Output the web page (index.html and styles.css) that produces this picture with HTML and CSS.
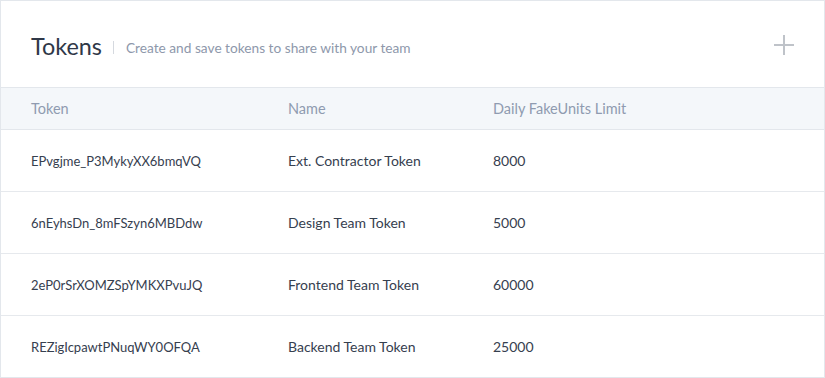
FILE: index.html
```html
<!DOCTYPE html>
<html>
<head>
<meta charset="utf-8">
<link rel="stylesheet" href="styles.css">
</head>
<body>
<div class="card">
  <div class="card-header">
    <h1 class="title">Tokens</h1>
    <span class="divider"></span>
    <span class="subtitle">Create and save tokens to share with your team</span>
    <button class="add" aria-label="Add token">
      <svg width="22" height="22" viewBox="0 0 22 22"><path d="M11 1V21M1 11H21" stroke="#bfc3c9" stroke-width="2" fill="none"/></svg>
    </button>
  </div>
  <div class="table">
    <div class="row head">
      <div>Token</div><div>Name</div><div>Daily FakeUnits Limit</div>
    </div>
    <div class="row">
      <div class="token">EPvgjme_P3MykyXX6bmqVQ</div><div>Ext. Contractor Token</div><div>8000</div>
    </div>
    <div class="row">
      <div class="token">6nEyhsDn_8mFSzyn6MBDdw</div><div>Design Team Token</div><div>5000</div>
    </div>
    <div class="row">
      <div class="token">2eP0rSrXOMZSpYMKXPvuJQ</div><div>Frontend Team Token</div><div>60000</div>
    </div>
    <div class="row">
      <div class="token">REZigIcpawtPNuqWY0OFQA</div><div>Backend Team Token</div><div>25000</div>
    </div>
  </div>
</div>
</body>
</html>
```
FILE: styles.css
```css
html, body {
  margin: 0;
  padding: 0;
  background: #ffffff;
}
body {
  font-family: Lato, "Open Sans", sans-serif;
  color: #36404f;
}
.card {
  box-sizing: border-box;
  width: 825px;
  height: 378px;
  border: 1px solid #e3e7ec;
  background: #fff;
  overflow: hidden;
}
.card-header {
  height: 87px;
  border-bottom: 1px solid #e3e7ec;
  display: flex;
  align-items: center;
  padding: 4px 30px 0 30px;
  box-sizing: border-box;
}
.title {
  margin: 0;
  font-size: 23.4px;
  font-weight: 400;
  color: #2f3848;
}
.divider {
  width: 1px;
  height: 13px;
  background: #d5d9df;
  margin: 3px 12px 0 11px;
}
.subtitle {
  font-size: 13.7px;
  color: #8e98ab;
  margin-top: 3px;
}
.add {
  margin-left: auto;
  border: 0;
  background: none;
  padding: 0;
  width: 22px;
  height: 22px;
  margin-right: -1px;
  margin-top: -3px;
  cursor: pointer;
}
.add svg { display: block; }
.row {
  display: grid;
  grid-template-columns: 257px 205px 1fr;
  padding-left: 30px;
  height: 61px;
  align-items: center;
  border-bottom: 1px solid #e6e9ed;
  font-size: 14px;
  color: #36404f;
}
.row .token {
  font-size: 13px;
}
.row.head {
  height: 41px;
  background: #f4f7fa;
  color: #8f9bb0;
  font-size: 14.5px;
  border-bottom: 1px solid #e3e7ec;
}
.row:last-child {
  border-bottom: 0;
}
```
